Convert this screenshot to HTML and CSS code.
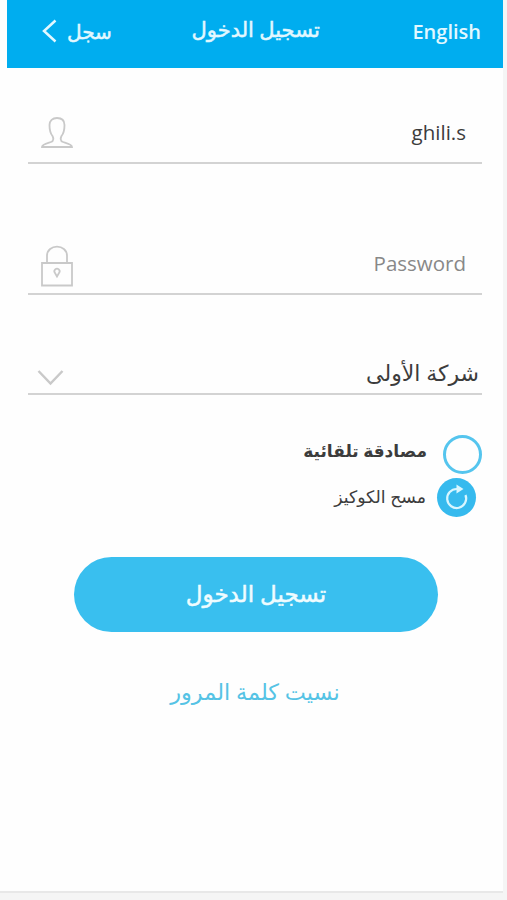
FILE: index.html
```html
<!DOCTYPE html>
<html lang="ar" dir="rtl">
<head>
  <meta charset="UTF-8" />
  <meta name="viewport" content="width=device-width, initial-scale=1.0"/>
  <title>تسجيل الدخول</title>
  <link rel="stylesheet" href="styles.css">
</head>
<body>

<div class="page">
  <header>
    <a class="lang" href="#">English</a>
    <h1>تسجيل الدخول</h1>
    <a class="register" href="#">
      <span>سجل</span>
      <svg width="15" height="24" viewBox="0 0 15 24"><path d="M13.5 1.5 L2 12 L13.5 22.5"/></svg>
    </a>
  </header>

  <form class="login">
    <div class="field user">
      <span class="value">ghili.s</span>
      <svg class="icon" width="34" height="34" viewBox="0 0 34 34"><path d="M2 31 C2 28 8 27 11 26 C14 25 13.5 22 12.5 20 C10 17 9.5 13 9.5 9 C9.5 4.5 12.5 2 17 2 C21.5 2 24.5 4.5 24.5 9 C24.5 13 24 17 21.5 20 C20.5 22 20 25 23 26 C26 27 32 28 32 31 Z"/></svg>
    </div>
    <div class="field password">
      <span class="placeholder">Password</span>
      <svg class="icon" width="34" height="42" viewBox="0 0 34 42"><path d="M2 18 H32 V40.5 H2 Z M7 18 V11 C7 -1.5 27 -1.5 27 11 V18"/><path d="M17 31.5 L15 28 A2.6 2.6 0 1 1 19 28 Z"/></svg>
    </div>
    <div class="field company">
      <span class="selected">شركة الأولى</span>
      <svg class="arrow" width="27" height="17" viewBox="0 0 27 17"><path d="M1.5 2 L13.5 14.5 L25.5 2"/></svg>
    </div>

    <label class="option auto">
      <span class="circle"></span>
      <span class="text">مصادقة تلقائية</span>
    </label>
    <div class="option cookies">
      <span class="circle refresh">
        <svg width="27" height="27" viewBox="0 0 27 27"><path d="M22.5 11 A9.5 9.5 0 1 1 14 5"/><path class="head" d="M13.5 0.5 L20.5 5 L13.5 9.5 Z"/></svg>
      </span>
      <span class="text">مسح الكوكيز</span>
    </div>

    <button type="button">تسجيل الدخول</button>
    <a class="forgot" href="#">نسيت كلمة المرور</a>
  </form>
</div>

</body>
</html>
```

FILE: styles.css
```css
* {
  box-sizing: border-box;
}
body {
  font-family: "Open Sans", "DejaVu Sans", sans-serif;
  margin: 0;
  background: #f5f5f5;
  color: #3c3c3c;
}
.page {
  height: 893px;
  margin-right: 4px;
  background: #fefefe;
  border-bottom: 2px solid #e8e8e8;
}
header {
  height: 68px;
  margin-left: 7px;
  padding: 0 22px 6px 35px;
  background: #00adef;
  display: flex;
  justify-content: space-between;
  align-items: center;
}
header h1 {
  margin: 0 13px 0 0;
  font-size: 21px;
  font-weight: normal;
  line-height: 28px;
  padding-bottom: 5px;
  white-space: nowrap;
}
header h1, header a {
  color: #e2f8ff;
}
header h1, .register, button {
  -webkit-text-stroke: 0.5px;
}
a {
  text-decoration: none;
}
.lang {
  font-size: 20px;
  font-weight: 600;
}
.register {
  display: flex;
  align-items: center;
  gap: 10px;
  font-size: 20px;
}
svg {
  fill: none;
  stroke: #c9c9c9;
  stroke-width: 1.8;
  flex-shrink: 0;
}
.register svg {
  stroke: #e2f8ff;
  stroke-width: 2.5;
}
.login {
  padding: 0 21px 0 28px;
  display: flex;
  flex-direction: column;
}
.field {
  display: flex;
  justify-content: space-between;
  align-items: flex-end;
  border-bottom: 2px solid #d3d3d3;
  font-size: 20.5px;
  line-height: 28px;
}
.user {
  height: 96px;
  padding: 0 16px 12px 12px;
}
.user .value {
  padding-bottom: 4px;
}
.password {
  height: 131px;
  padding: 0 16px 6px 12px;
}
.password .placeholder {
  color: #888;
  padding-bottom: 10px;
}
.company {
  height: 100px;
  padding: 0 3px 7px 9px;
  font-size: 22px;
}
.company svg {
  stroke-width: 2.5;
}
.option {
  display: flex;
  align-items: center;
  gap: 16px;
}
.auto {
  margin-top: 40px;
  font-size: 17px;
  font-weight: bold;
}
.auto .text {
  padding-bottom: 8px;
}
.cookies {
  margin-top: 4px;
  padding-right: 6px;
  gap: 11px;
  font-size: 17.3px;
}
.cookies .text {
  padding-bottom: 2px;
}
.circle {
  width: 39px;
  height: 39px;
  border: 3px solid #55c5ee;
  border-radius: 50%;
}
.refresh {
  border: none;
  background: #36baee;
  display: flex;
  align-items: center;
  justify-content: center;
}
.refresh svg {
  stroke: #d9f6ff;
  stroke-width: 2.2;
}
.refresh .head {
  fill: #d9f6ff;
  stroke: none;
}
button {
  width: 364px;
  height: 75px;
  margin: 40px 44px 0 0;
  padding: 0 0 3px;
  border: none;
  border-radius: 38px;
  background: #39bfef;
  color: #effcff;
  font-family: inherit;
  font-size: 23px;
  cursor: pointer;
}
.forgot {
  margin-top: 44px;
  text-align: center;
  font-size: 22.4px;
  color: #55c3e5;
}
```
